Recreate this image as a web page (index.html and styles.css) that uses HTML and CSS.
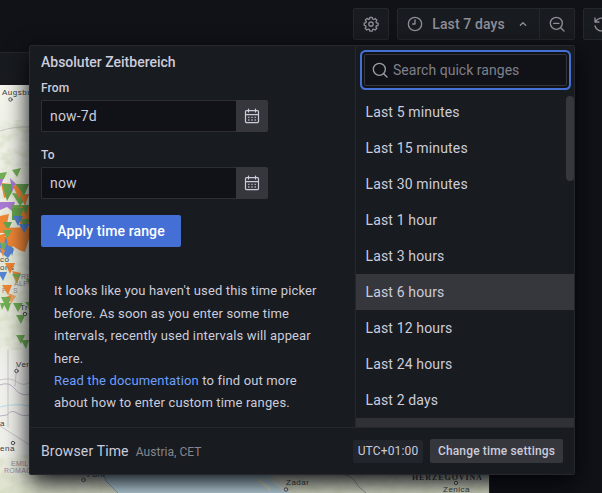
FILE: index.html
```html
<!DOCTYPE html>
<html lang="de">
<head>
<meta charset="utf-8">
<title>Dashboard</title>
<link rel="stylesheet" href="styles.css">
</head>
<body>
<header class="toolbar">
  <button class="tool settings" aria-label="Settings"><svg width="16" height="16" viewBox="0 0 24 24"><path d="M10.200 2h3.600l.6 2.500 1.600.7 2.300-1.400 2.500 2.500-1.400 2.300.7 1.600 2.500.6v3.200l-2.500.6-.7 1.600 1.400 2.300-2.500 2.500-2.300-1.400-1.600.7-.6 2.500h-3.600l-.6-2.500-1.600-.7-2.300 1.400-2.500-2.500 1.400-2.300-.7-1.600L1.800 14v-3.400l2.500-.6.7-1.600-1.400-2.300 2.500-2.500 2.300 1.400 1.600-.7z"/><circle cx="12" cy="12.200" r="3.200"/></svg></button>
  <div class="group">
    <button class="tool range"><svg width="16" height="16" viewBox="0 0 24 24"><circle cx="12" cy="12" r="10"/><path d="M12 6v6H8.500"/></svg><span>Last 7 days</span><svg class="chevron" width="16" height="16" viewBox="0 0 24 24"><path d="M8 14l4-4 4 4"/></svg></button>
    <button class="tool zoom" aria-label="Zoom out"><svg width="16" height="16" viewBox="0 0 24 24"><circle cx="11" cy="11" r="9"/><path d="M7 11h8M17.500 17.500l5 5"/></svg></button>
  </div>
  <button class="tool refresh" aria-label="Refresh"><svg width="16" height="16" viewBox="0 0 24 24"><path d="M3 3v6h6M3.500 9a9.500 9.500 0 1 1-.5 6"/></svg></button>
</header>

<main class="panel">
  <div class="panel-head"></div>
  <svg class="map" width="489" height="408" viewBox="0 85 489 408">
    <defs>
      <filter id="relief" x="0" y="0" width="100%" height="100%"><feTurbulence type="fractalNoise" baseFrequency=".09 .12" numOctaves="3" seed="4"/><feColorMatrix values="0 0 0 0 .62  0 0 0 0 .68  0 0 0 0 .48  2.200 0 0 0 -.85"/></filter>
      <linearGradient id="land" x1="0" y1="0" x2="0" y2="1"><stop offset="0" stop-color="#f4f6ee"/><stop offset=".25" stop-color="#eef0e4"/><stop offset=".6" stop-color="#e6eadb"/><stop offset=".7" stop-color="#f1f1ed"/><stop offset=".9" stop-color="#f0f0ea"/><stop offset="1" stop-color="#dce1cb"/></linearGradient>
    </defs>
    <rect y="85" width="489" height="408" fill="url(#land)"/>
    <rect y="120" width="60" height="230" filter="url(#relief)" opacity=".6"/>
    <rect y="455" width="489" height="38" filter="url(#relief)" opacity=".6"/>
    <path d="M101 470l5 11 12 12h172l-12-12-12-11z" fill="#c3dce6"/>
    <path d="M101 470l5 11 12 12" class="line" stroke="#91afd0"/>
    <path d="M258 477l13 11-1 3-13-10zM272 476l13 13-2 2-13-11z" fill="#dde3d3"/>
    <g class="line"><path d="M0 131q15-5 30-4M8 350v77M17 364l-2 22M0 426l30 19M0 380q10-3 17 2t13 0" stroke="#cbc7cb"/><path d="M0 385q9-4 15 4t15 5M0 416l7-1q4-6 10-2t13 2" stroke="#bdb3c8"/><path d="M0 407q15-4 30-1" stroke="#b9dcea"/><path d="M342 474q12 2 16 12l8 7" stroke="#a797b0"/></g>
    <g class="regions"><text x="21" y="279">REP</text><text x="14" y="286">ALPEN</text><text x="2" y="293">P</text><text x="13" y="293">S</text><text x="11" y="466">EMILIA</text><text x="4" y="473">ROMAGNA</text></g>
    <g class="labels"><text x="2" y="95">Augsbu</text><circle cx="10.500" cy="99.500" r="1.700"/><text x="0" y="262">co</text><text x="0" y="270">ons</text><text x="20" y="310">Tre</text><circle cx="25" cy="314" r="1.700"/><text x="16" y="367">Ver</text><circle cx="16.500" cy="371" r="1.700"/><text x="0" y="426">a</text><circle cx="13" cy="443" r="1.700"/><text x="0" y="451">ena</text><text x="87" y="477">Forlì</text><circle cx="83.500" cy="480" r="1.700"/><text x="286" y="485">Zadar</text><circle cx="286" cy="489.500" r="1.700"/><text x="443" y="492">Zenica</text><circle cx="456" cy="483" r="1.700"/><text class="country" x="412" y="480">HERZEGOVINA</text></g>
    <g class="markers">
      <path fill="#a16bd2" d="M-3 178h7l-4 9zM10 178l6 6-4 8zM0 202h15l-3 9-5-4-7 3z"/>
      <path fill="#62a744" d="M-1 173l8-1-3 7h-5zM12 170l9-2-4 9zM15 184h12l-5 11zM12 193l17 2-9 11zM12 205h17l-5 12H14z"/>
      <path fill="#f27a20" d="M1 183l10 1-2 12-5 2zM13 186l13-2-7 15zM20 195l9-1-4 12zM0 216l9-2-4 19H0zM13 209l7 2-4 8zM20 207h9v18h-9z"/>
      <path fill="#579b3d" d="M2 184h10v8l-5 9zM16 184h13l-5 12zM12 208h12l-5 12h-7zM20 219h10l-5 10zM3 222h9l-4 9zM22 206l7-1-3 10z"/>
      <path fill="#4277d2" d="M13 216h10l-5 10zM19 224h10l-5 10zM0 237h6l7 14-5 7-8-6zM9 244l5 5-2 7z"/>
      <path fill="#f27a20" d="M4 228l25-1v12l-4 13-6-2-6-4-4 4zM0 235l6-2-2 13-4-4z"/>
      <path fill="#4277d2" d="M20 225h9l-5 8zM4 244l8 3-6 9z"/>
      <path fill="#62a744" d="M3 230h9l-5 9zM0 243h7l-4 9z"/>
      <path fill="#f27a20" d="M5 263h10l-5 11zM12 271l9 2-5 7zM2 285h10l-4 10zM2 298l10-3-4 9zM0 248l5 2-2 7z"/>
      <path fill="#4277d2" d="M-2 272h9l-4 9z"/>
      <path fill="#62a744" d="M12 274h9l-4 9zM1 297h10l-4 12zM3 303h8l-3 9zM13 303h10l-5 9zM0 303h5l-3 7zM16 315h9l-4 9zM16 335h9l-4 9zM21 340h8l-3 9zM26 279h4v6zM25 302h4v5z"/>
      <path fill="#f27a20" d="M8 293l8 3-5 8zM14 277h5l-3 6z" opacity=".65"/>
    </g>
  </svg>
</main>

<section class="picker">
  <div class="body">
    <div class="absolute">
      <h3>Absoluter Zeitbereich</h3>
      <label>From</label>
      <div class="field"><div class="input">now-7d</div><button class="calendar" aria-label="Open calendar"><svg width="16" height="16" viewBox="0 0 16 16"><path d="M4.500 1v3M11.500 1v3M2.500 2.600h11q1 0 1 1v10q0 1-1 1h-11q-1 0-1-1v-10q0-1 1-1zM1.500 6.600h13"/><path class="dots" d="M4 9.300h1.500M7.300 9.300h1.500M10.500 9.300H12M4 12h1.500M7.300 12h1.500M10.500 12H12"/></svg></button></div>
      <label>To</label>
      <div class="field"><div class="input">now</div><button class="calendar" aria-label="Open calendar"><svg width="16" height="16" viewBox="0 0 16 16"><path d="M4.500 1v3M11.500 1v3M2.500 2.600h11q1 0 1 1v10q0 1-1 1h-11q-1 0-1-1v-10q0-1 1-1zM1.500 6.600h13"/><path class="dots" d="M4 9.300h1.500M7.300 9.300h1.500M10.500 9.300H12M4 12h1.500M7.300 12h1.500M10.500 12H12"/></svg></button></div>
      <button class="apply">Apply time range</button>
      <p>It looks like you haven't used this time picker before. As soon as you enter some time intervals, recently used intervals will appear here.<br><a>Read the documentation</a> to find out more about how to enter custom time ranges.</p>
    </div>
    <div class="quick">
      <div class="search"><svg width="16" height="16" viewBox="0 0 24 24"><circle cx="11" cy="11" r="9"/><path d="M17.500 17.500l5 5"/></svg><span>Search quick ranges</span></div>
      <ul>
        <li>Last 5 minutes</li><li>Last 15 minutes</li><li>Last 30 minutes</li><li>Last 1 hour</li><li>Last 3 hours</li><li class="hover">Last 6 hours</li><li>Last 12 hours</li><li>Last 24 hours</li><li>Last 2 days</li><li class="selected"></li>
      </ul>
      <i class="scrollbar"></i>
    </div>
  </div>
  <footer><span class="zone">Browser Time</span><span class="place">Austria, CET</span><span class="utc">UTC+01:00</span><button class="change">Change time settings</button></footer>
</section>
</body>
</html>
```
FILE: styles.css
```css
* { box-sizing: border-box; }
body { margin: 0; width: 602px; height: 493px; overflow: hidden; position: relative; background: #111217; color: #ccccdc; font: 14px/22px Roboto, sans-serif; letter-spacing: .15px; }
button { font: inherit; letter-spacing: inherit; color: inherit; border: 0; padding: 0; margin: 0; }
svg { display: block; flex: none; fill: none; stroke: currentColor; stroke-width: 2; stroke-linecap: round; stroke-linejoin: round; }

.toolbar { height: 52px; padding-top: 8px; display: flex; gap: 8px; padding-left: 353px; }
.tool { height: 32px; flex: none; display: flex; align-items: center; justify-content: center; background: #181b1f; border: 1px solid #25272c; border-radius: 2px; color: #8e8e99; }
.settings { width: 36px; }
.group { display: flex; flex: none; }
.range { width: 143px; justify-content: flex-start; padding-left: 9px; font-weight: 500; border-radius: 2px 0 0 2px; }
.range span { width: 75px; margin-left: 8px; white-space: nowrap; letter-spacing: .1px; }
.chevron { margin-left: 9px; }
.zoom { width: 36px; margin-left: -1px; border-radius: 0 2px 2px 0; }
.refresh { width: 36px; }

.panel { width: 490px; height: 441px; border-top: 1px solid #25272c; border-right: 1px solid #25272c; background: #181b1f; }
.panel-head { height: 32px; }
.map { stroke: none; }
.line { fill: none; stroke-width: 1; }
.markers { opacity: .88; }
.labels { font: 8px "Liberation Sans", sans-serif; letter-spacing: .5px; fill: #424242; }
.labels circle { fill: #eee; stroke: #555; stroke-width: 1; }
.country { font: 700 8px "Liberation Serif", serif; letter-spacing: .9px; }
.regions { font: 7px "Liberation Sans", sans-serif; letter-spacing: .3px; fill: #9a86a0; }

.picker { position: absolute; left: 29px; top: 45px; width: 546px; height: 430px; display: flex; flex-direction: column; background: #181b1f; border: 1px solid #25272c; border-radius: 2px; box-shadow: 0 8px 24px #010409; }
.body { height: 381px; display: flex; }
.absolute { width: 325px; padding: 5px 11px 0; }
h3 { margin: 0; font: 500 14px/22px Roboto, sans-serif; letter-spacing: 0; }
label { display: block; font: 500 12px/15px Roboto, sans-serif; margin: 8px 0 4px; }
.field { display: flex; width: 227px; height: 32px; }
.field + label { margin-top: 16px; }
.input { flex: 1; border: 1px solid #2d2e34; border-right: 0; background: #111217; border-radius: 2px 0 0 2px; padding-left: 8px; line-height: 30px; }
.calendar { width: 32px; display: grid; place-items: center; background: #35373c; border-radius: 0 2px 2px 0; }
.calendar svg { stroke-width: 1.2; }
.dots { stroke-linecap: butt; stroke-width: 1.3; opacity: .75; }
.apply { display: block; width: 140px; height: 32px; margin-top: 16px; background: #4470d5; color: #fff; font-weight: 500; letter-spacing: .12px; border-radius: 2px; }
p { margin: 33.3px 0 0 13px; width: 275px; font-size: 13px; line-height: 22.4px; letter-spacing: .15px; }
a { color: #6e9fff; }
.quick { position: relative; width: 219px; border-left: 1px solid #25272c; overflow: hidden; }
.search { margin: 8px 7px 0 8px; height: 32px; border: 1px solid #35363c; border-radius: 2px; background: #111217; box-shadow: 0 0 0 2px #111217, 0 0 0 4px #4470d5; display: flex; align-items: center; padding-left: 7px; gap: 5px; color: #7f8089; letter-spacing: .03px; }
.search svg { color: #9b9ca7; }
ul { list-style: none; margin: 8px 0 0; padding: 0; }
li { height: 36px; line-height: 36px; padding-left: 9.5px; }
.hover { background: #35373c; }
.selected { background: #2f3136; }
.scrollbar { position: absolute; right: 0; top: 50px; width: 8px; height: 85px; border-radius: 4px; background: #36383d; }
footer { height: 47px; border-top: 1px solid #25272c; display: flex; align-items: center; padding: 0 11px; }
.place { margin-left: 7px; font-size: 12px; letter-spacing: .05px; color: #85868f; padding-top: 1px; }
.utc { margin-left: auto; width: 70px; height: 23px; line-height: 22px; text-align: center; background: #22252b; border-radius: 2px; font-size: 12px; white-space: nowrap; }
.change { width: 133px; height: 24px; margin-left: 7px; background: #35373c; border-radius: 2px; font-size: 12px; font-weight: 500; white-space: nowrap; }
```
